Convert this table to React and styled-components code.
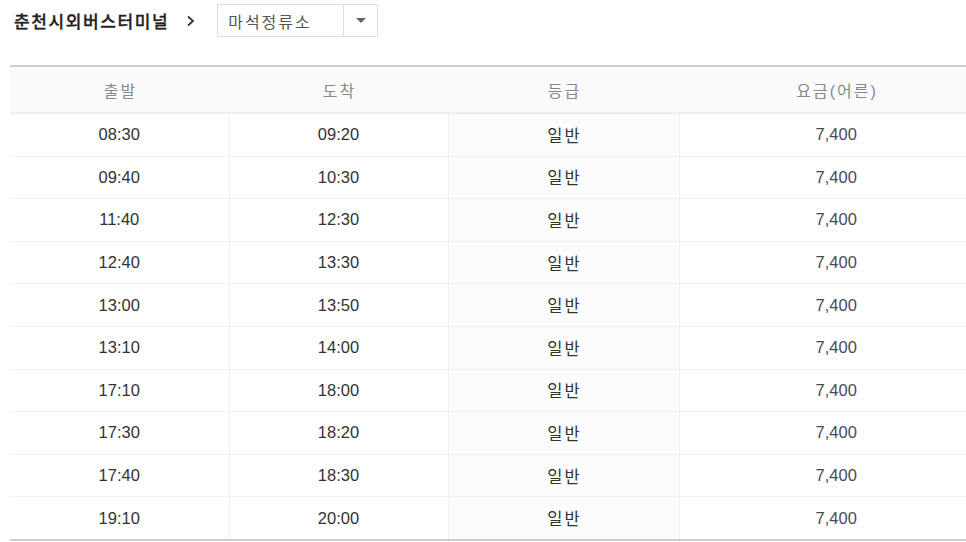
import React from "react";
import styled, { createGlobalStyle } from "styled-components";

const Global = createGlobalStyle`
  html, body { margin: 0; padding: 0; background: #fff; overflow: hidden; }
  body { font-family: "Liberation Sans", "Noto Sans CJK KR", sans-serif; }
`;

const Page = styled.div`
  width: 966px;
  height: 542px;
  overflow: hidden;
  padding: 4px 0 0 10px;
  box-sizing: border-box;
`;

const Bar = styled.div`
  display: flex;
  align-items: center;
  height: 33px;
`;

const Title = styled.span`
  font-size: 17px;
  font-weight: 500;
  color: #222;
  margin-left: 4px;
  letter-spacing: 1.6px;
  -webkit-text-stroke: 0.3px #222;
`;

const Chevron = styled.svg`
  margin: 0 21px 0 17px;
`;

const Select = styled.div`
  display: flex;
  width: 161px;
  height: 33px;
  box-sizing: border-box;
  border: 1px solid #ddd;
  background: #fff;
`;

const SelectText = styled.div`
  flex: 1;
  display: flex;
  align-items: center;
  padding-left: 10px;
  font-size: 16px;
  letter-spacing: 2px;
  color: #555;
  border-right: 1px solid #ddd;
`;

const Caret = styled.div`
  width: 33px;
  display: flex;
  align-items: center;
  justify-content: center;
`;

const Table = styled.table`
  margin-top: 28px;
  width: 983px;
  border-collapse: collapse;
  table-layout: fixed;
  border-top: 2px solid #ccc;
  border-bottom: 2px solid #ccc;
`;

const Th = styled.th`
  height: 45px;
  padding: 0 0 0 2px;
  background: #fafafa;
  border-bottom: 2px solid #eee;
  font-weight: normal;
  font-size: 16px;
  letter-spacing: 2px;
  color: #888;
  text-align: center;
`;

const Td = styled.td`
  height: 41.6px;
  padding: 0 0 0 ${(p) => (p.$shade ? "2px" : "0")};
  text-align: center;
  font-size: 16.5px;
  letter-spacing: ${(p) => (p.$shade ? "2px" : "0")};
  color: ${(p) => p.$color || "#333"};
  border-bottom: 1px solid #f0f0f0;
  border-left: ${(p) => (p.$first ? "none" : "1px solid #f0f0f0")};
  background: ${(p) => (p.$shade ? "#fbfbfb" : "#fff")};
`;

const rows = [
  ["08:30", "09:20"],
  ["09:40", "10:30"],
  ["11:40", "12:30"],
  ["12:40", "13:30"],
  ["13:00", "13:50"],
  ["13:10", "14:00"],
  ["17:10", "18:00"],
  ["17:30", "18:20"],
  ["17:40", "18:30"],
  ["19:10", "20:00"],
];

export default function App() {
  return (
    <Page>
      <Global />
      <Bar>
        <Title>춘천시외버스터미널</Title>
        <Chevron width="10" height="14" viewBox="0 0 10 14">
          <path d="M2 2.5 L7 7 L2 11.5" fill="none" stroke="#333" strokeWidth="1.8" />
        </Chevron>
        <Select>
          <SelectText>마석정류소</SelectText>
          <Caret>
            <svg width="10" height="6" viewBox="0 0 10 6">
              <path d="M0 0 H10 L5 5 Z" fill="#666" />
            </svg>
          </Caret>
        </Select>
      </Bar>
      <Table>
        <colgroup>
          <col style={{ width: 219 }} />
          <col style={{ width: 219 }} />
          <col style={{ width: 231 }} />
          <col style={{ width: 314 }} />
        </colgroup>
        <thead>
          <tr>
            <Th>출발</Th>
            <Th>도착</Th>
            <Th>등급</Th>
            <Th>요금(어른)</Th>
          </tr>
        </thead>
        <tbody>
          {rows.map(([d, a]) => (
            <tr key={d}>
              <Td $first>{d}</Td>
              <Td>{a}</Td>
              <Td $shade>일반</Td>
              <Td $color="#4a4a5a">7,400</Td>
            </tr>
          ))}
        </tbody>
      </Table>
    </Page>
  );
}
